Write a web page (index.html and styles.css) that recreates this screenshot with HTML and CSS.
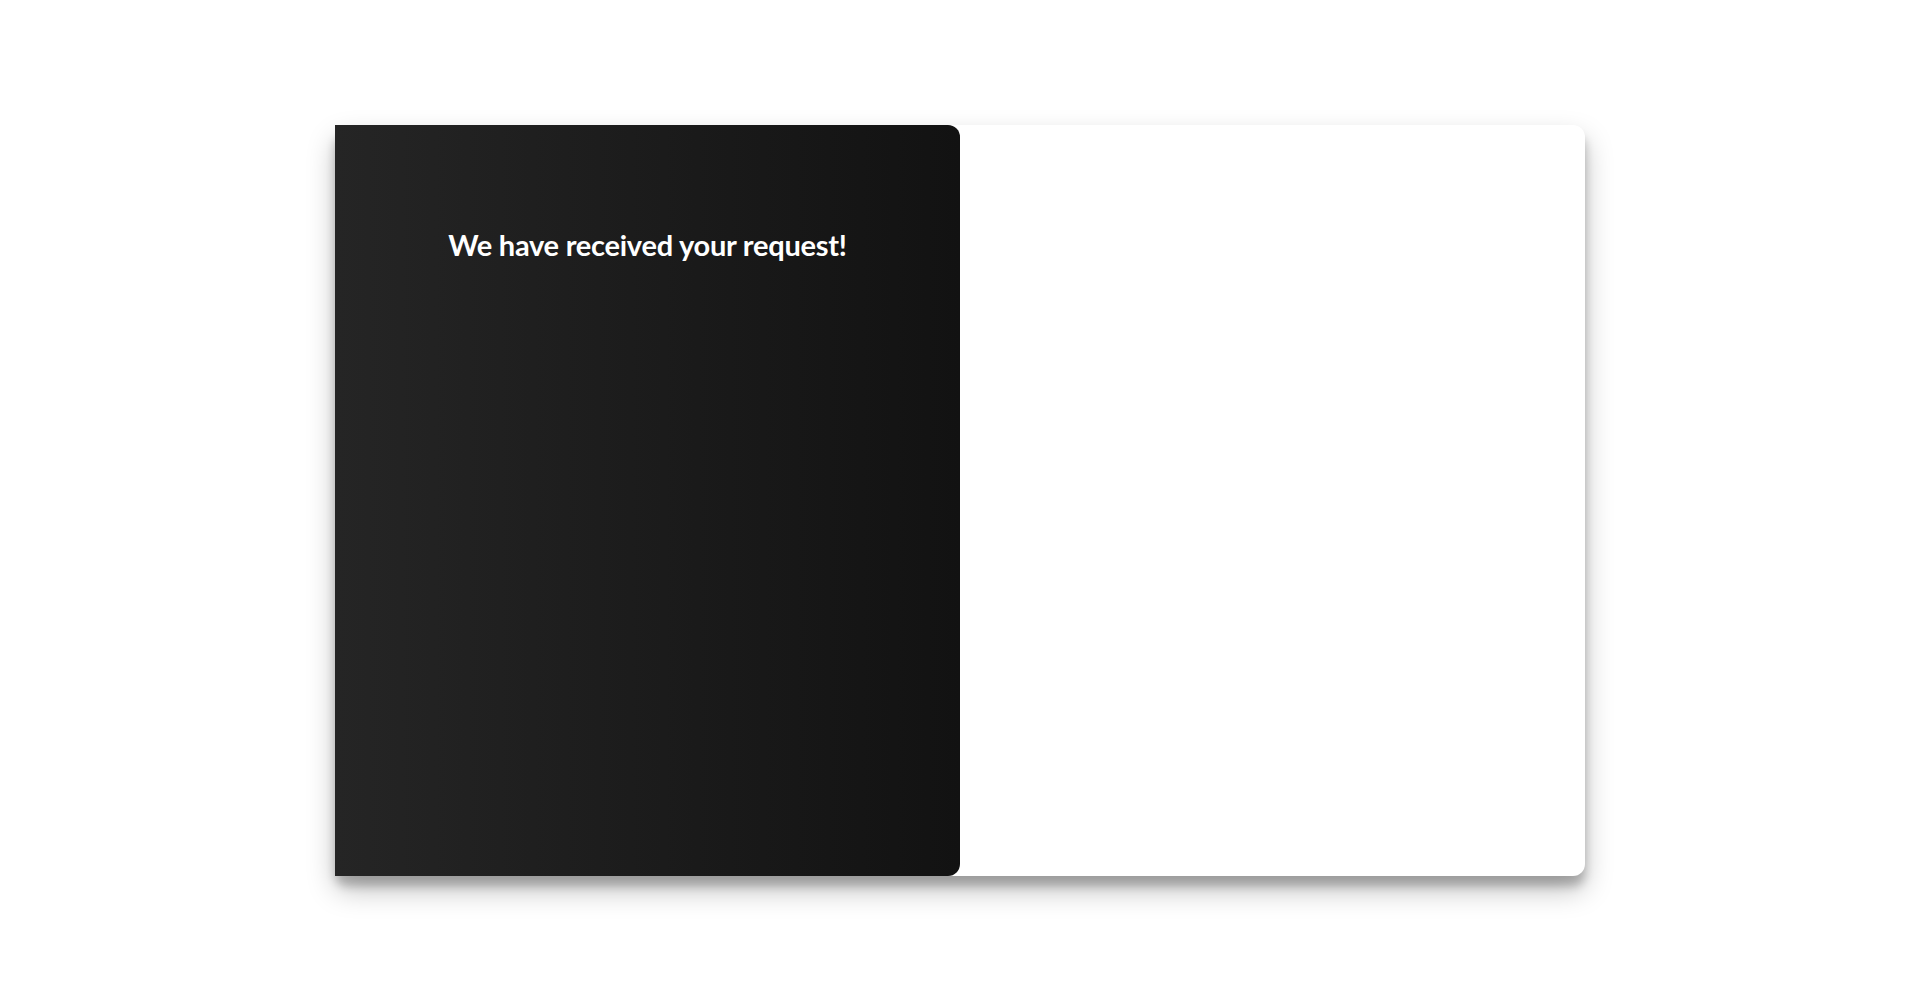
FILE: index.html
```html
<!DOCTYPE html>
<html lang="en">
<head>
<meta charset="utf-8">
<title>Request received</title>
<link rel="stylesheet" href="styles.css">
</head>
<body>
<div class="page">
  <div class="card">
    <div class="panel">
      <h1 class="title">We have received your request!</h1>
    </div>
    <div class="blank"></div>
  </div>
</div>
</body>
</html>
```
FILE: styles.css
```css
html, body {
  margin: 0;
  padding: 0;
  background: #ffffff;
  font-family: Lato, "Open Sans", sans-serif;
}
.page {
  display: flex;
  justify-content: center;
  align-items: flex-start;
  padding-top: 125px;
  min-height: 100vh;
  box-sizing: border-box;
}
.card {
  width: 1250px;
  height: 751px;
  display: flex;
  background: #ffffff;
  border-radius: 12px;
  box-shadow: 0 14px 28px rgba(0,0,0,0.25), 0 10px 10px rgba(0,0,0,0.22);
}
.panel {
  width: 625px;
  height: 100%;
  background: linear-gradient(to right, #252525, #121212);
  border-radius: 0 12px 12px 0;
  display: flex;
  flex-direction: column;
  align-items: center;
  padding-top: 100px;
  box-sizing: border-box;
}
.title {
  margin: 0;
  color: #ffffff;
  font-size: 29px;
  font-weight: 700;
  line-height: 40px;
  letter-spacing: -0.25px;
}
.blank {
  flex: 1;
}
```
